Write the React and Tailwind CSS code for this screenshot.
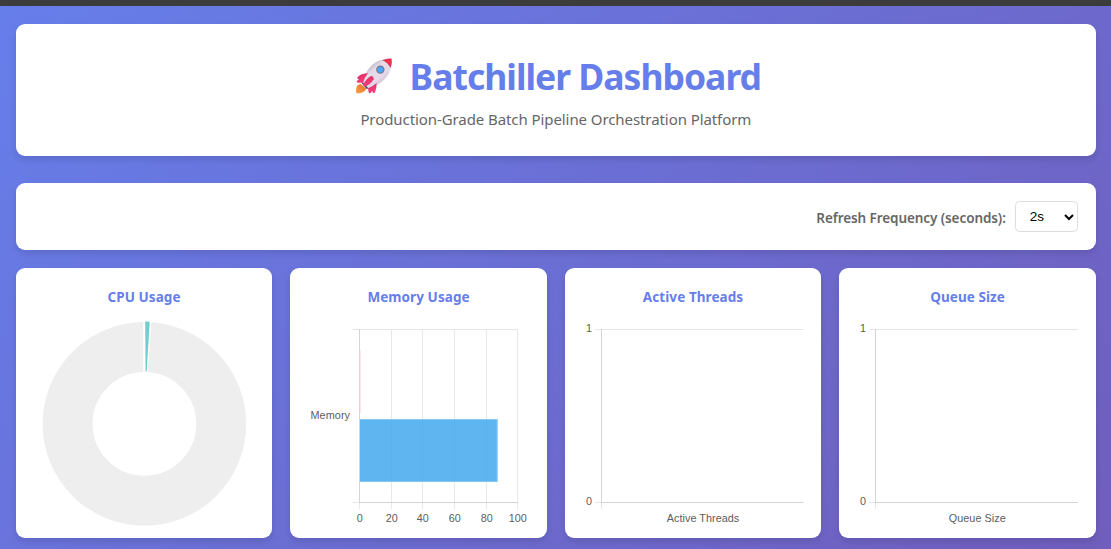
import React from "react";

function Rocket() {
  return (
    <svg viewBox="45 55 114 114" className="h-[38px] w-[38px] shrink-0" aria-hidden="true">
      <defs>
        <linearGradient id="body" x1="0.25" y1="0.2" x2="0.75" y2="0.8">
          <stop offset="0" stopColor="#bfb4c4" />
          <stop offset="0.3" stopColor="#e4dce8" />
          <stop offset="0.7" stopColor="#e6d9e8" />
          <stop offset="1" stopColor="#cdbcd6" />
        </linearGradient>
        <linearGradient id="red" x1="0" y1="0" x2="1" y2="1">
          <stop offset="0" stopColor="#c92f3c" />
          <stop offset="0.5" stopColor="#f5304f" />
          <stop offset="1" stopColor="#d62a55" />
        </linearGradient>
        <linearGradient id="fin" x1="0" y1="0" x2="0.6" y2="1">
          <stop offset="0" stopColor="#cf2d5d" />
          <stop offset="1" stopColor="#ff3d80" />
        </linearGradient>
        <linearGradient id="flame" x1="1" y1="0" x2="0" y2="1">
          <stop offset="0" stopColor="#e0702c" />
          <stop offset="1" stopColor="#ffa044" />
        </linearGradient>
      </defs>
      <path d="M62 136 Q50 137 49 149 Q47 156 49 163 Q57 165 65 162 Q75 160 79 150 Z" fill="url(#flame)" />
      <path d="M65 134 L80 151 L88 148 L68 128 Z" fill="#393b6b" />
      <path d="M67 131 Q75 98 96 79 Q122 58 155 60 Q157 91 140 114 Q120 139 85 149 Z" fill="url(#body)" />
      <path d="M127 65 Q142 59 155 60 Q157 74 152 88 Q143 72 127 65 Z" fill="url(#red)" />
      <path d="M84 104 Q63 105 54 114 Q50 117 53 121 L57 122 L50 128 Q49 131 53 132 L70 132 Q73 116 84 104 Z" fill="url(#fin)" />
      <path d="M110 133 Q110 151 105 161 Q102 165 98 162 L97 156 L91 163 Q87 165 86 161 L84 149 Q98 144 110 133 Z" fill="url(#fin)" />
      <path d="M93 112 Q102 113 101 122 Q91 139 74 144 L69 139 Q77 122 93 112 Z" fill="url(#fin)" />
      <circle cx="121" cy="93" r="12.5" fill="#76748c" />
      <circle cx="121" cy="93" r="9" fill="#4aa7f5" />
    </svg>
  );
}

const tick = "fill-[#5c5c5c] font-['Liberation_Sans',Arial,sans-serif] text-[10.8px]";

function CpuChart() {
  return (
    <>
      <circle cx="128.4" cy="155.9" r="76.8" fill="none" stroke="#eeeeee" strokeWidth="50" />
      <path d="M128 52.5 L134.8 52.7 L130.8 105 L128 105 Z" fill="#fff" stroke="#fff" strokeWidth="1.5" />
      <path d="M129.2 53.5 L133.7 53.7 L130.7 103.5 L129.5 103.5 Z" fill="#6fcfcf" />
    </>
  );
}

function MemoryChart() {
  const ticks = [0, 20, 40, 60, 80, 100];
  const xs = [69.5, 101.5, 132.5, 164.5, 196.5, 227.5];
  return (
    <>
      {ticks.map((t, i) => (
        <g key={t}>
          <path d={`M${xs[i]} 61 V241`} stroke="#e8e8e8" />
          <text x={xs[i] + 0.3} y="254" textAnchor="middle" className={tick}>{t}</text>
        </g>
      ))}
      <path d="M63 61.5 H228 M63 234.5 H69" stroke="#e5e5e5" />
      <path d="M69.5 61 V235 M69 234.5 H228" stroke="#d5d5d5" />
      <path d="M70.3 82 V145" stroke="#ffe0e6" />
      <rect x="70" y="151" width="137.5" height="63" fill="#36a2eb" fillOpacity="0.8" />
      <path d="M70 151.5 H207 V213.5 H70" fill="none" stroke="#86c7f3" strokeWidth="1" />
      <text x="60" y="150.5" textAnchor="end" textLength="39.5" className={tick}>Memory</text>
    </>
  );
}

function EmptyChart({ label, x, right, width }) {
  return (
    <>
      <path d={`M${x - 6.5} 61.5 H${right} M${x - 6.5} 234.5 H${x} M${x} 235 V241`} stroke="#e5e5e5" />
      <path d={`M${x} 61 V235 M${x} 234.5 H${right}`} stroke="#d5d5d5" />
      <text x={x - 9.5} y="64" textAnchor="end" className={tick}>1</text>
      <text x={x - 9.5} y="237" textAnchor="end" className={tick}>0</text>
      <text x={(x + right) / 2 + 0.5} y="254" textAnchor="middle" textLength={width} className={tick}>{label}</text>
    </>
  );
}

function Card({ title, children }) {
  return (
    <section className="grid h-[270px] min-w-0 rounded-[9px] bg-white shadow-[0_4px_6px_rgba(0,0,0,0.1)]">
      <h3 className="col-start-1 row-start-1 pt-[19px] text-center text-[13.5px] leading-5 font-bold tracking-[0.08px] text-[#667eea]">
        {title}
      </h3>
      <svg viewBox="0 0 256 270" className="col-start-1 row-start-1 h-[270px] w-[256px]">
        {children}
      </svg>
    </section>
  );
}

export default function App() {
  return (
    <div className="h-[549px] overflow-hidden bg-[#3c3c3c] pt-[6px] font-['Noto_Sans','Open_Sans',sans-serif]">
      <div className="h-[1500px] bg-[linear-gradient(135deg,#667eea_0%,#764ba2_100%)] pt-[18px] pr-[15.2px] pl-[15.8px]">
        <header className="flex h-[132px] flex-col items-center rounded-[9px] bg-white pt-[28px] shadow-[0_4px_6px_rgba(0,0,0,0.1)]">
          <h1 className="flex h-12 items-center gap-[17px] pl-1 text-[35.5px] leading-[48px] font-bold text-[#667eea]">
            <Rocket />
            <span className="whitespace-nowrap tracking-[-1px]">Batchiller Dashboard</span>
          </h1>
          <p className="mt-[7px] text-[15px] leading-6 tracking-[-0.08px] text-[#666]">Production-Grade Batch Pipeline Orchestration Platform</p>
        </header>

        <div className="mt-[27px] flex h-[67px] items-center justify-end gap-[9px] rounded-[9px] bg-white pr-[18px] shadow-[0_4px_6px_rgba(0,0,0,0.1)]">
          <label htmlFor="freq" className="pt-[3px] text-[13.5px] font-semibold tracking-[-0.08px] text-[#666]">Refresh Frequency (seconds):</label>
          <button id="freq" className="flex h-[31px] w-[63px] items-center justify-between rounded-[4.5px] border border-[#ddd] bg-white pr-[3px] pl-[14px] font-['Liberation_Sans',Arial,sans-serif] text-[13.5px] text-black">
            <span className="pt-0.5">2s</span>
            <svg viewBox="0 0 10 8" className="h-2 w-[10px]" fill="none" stroke="currentColor" strokeWidth="2">
              <path d="M1 2 L5 6 L9 2" />
            </svg>
          </button>
        </div>

        <main className="mt-[18px] grid grid-cols-4 gap-[18px]">
          <Card title="CPU Usage"><CpuChart /></Card>
          <Card title="Memory Usage"><MemoryChart /></Card>
          <Card title="Active Threads"><EmptyChart label="Active Threads" x={36.5} right={238.5} width={72.5} /></Card>
          <Card title="Queue Size"><EmptyChart label="Queue Size" x={36.5} right={239} width={57} /></Card>
        </main>
      </div>
    </div>
  );
}
